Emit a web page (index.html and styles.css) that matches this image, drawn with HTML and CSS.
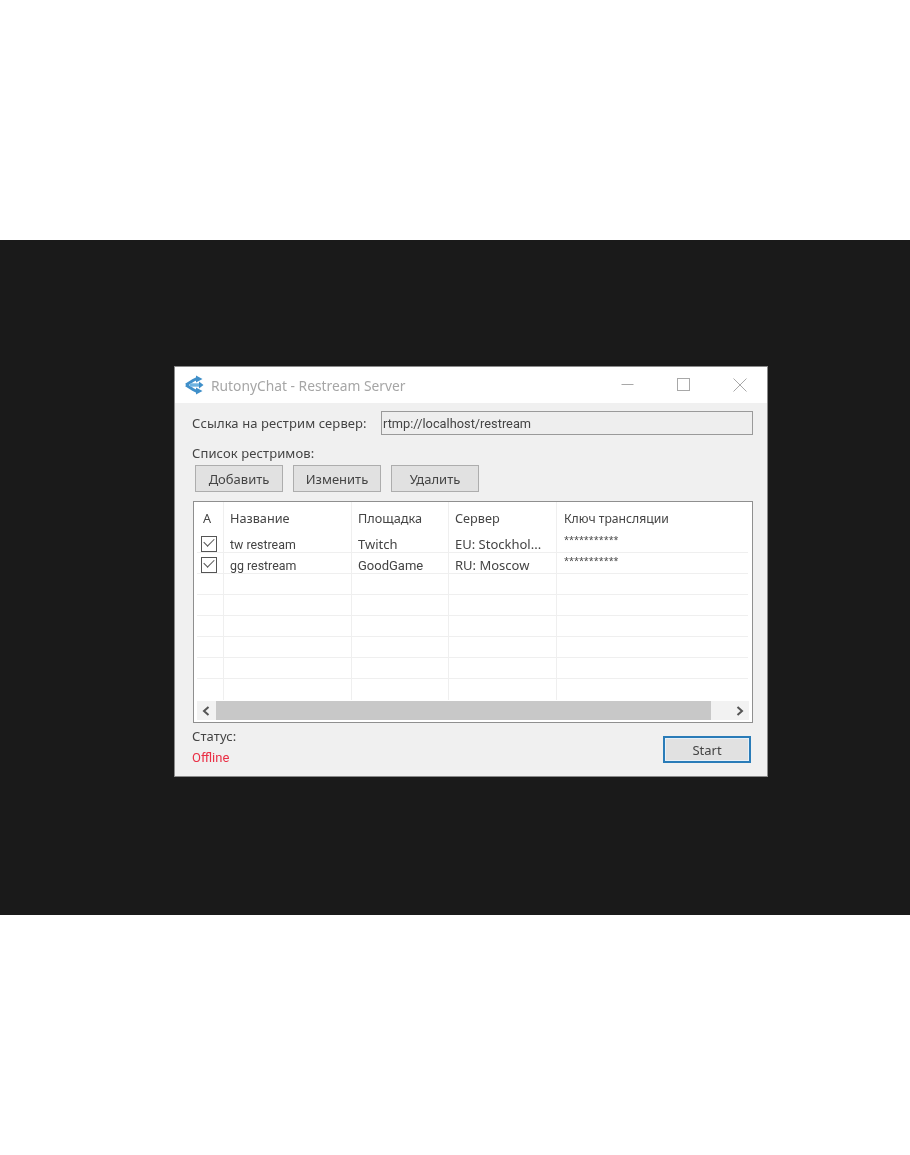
FILE: index.html
```html
<!DOCTYPE html>
<html lang="en">
<head>
    <meta charset="UTF-8">
    <title>RutonyChat - Restream Server</title>
    <link rel="stylesheet" href="styles.css">
</head>
<body>
    <main class="stage">
        <div class="window">
            <header class="titlebar">
                <svg class="app-icon" width="20" height="20" viewBox="0 0 20 20">
                    <path d="M2 10 L9 5.5 L13 3.5" fill="none" stroke="#3f8fc9" stroke-width="3"/>
                    <path d="M2 10 L9 14.5 L13 16.5" fill="none" stroke="#3f8fc9" stroke-width="3"/>
                    <path d="M6 10 H16" fill="none" stroke="#6db2e0" stroke-width="3.4"/>
                    <path d="M12 0.5 L18.5 4 L12 7.5 Z M12 12.5 L18.5 16 L12 19.5 Z M15 6.5 L19.5 10 L15 13.5 Z" fill="#3f8fc9"/>
                </svg>
                <span class="title">RutonyChat - Restream Server</span>
                <div class="win-controls">
                    <svg width="14" height="14" viewBox="0 0 14 14"><path d="M0.5 6.5 H12.5" stroke="#a8a8a8" fill="none"/></svg>
                    <svg width="14" height="14" viewBox="0 0 14 14"><rect x="0.5" y="0.5" width="12" height="12" stroke="#a8a8a8" fill="none"/></svg>
                    <svg width="14" height="14" viewBox="0 0 14 14"><path d="M0.5 0.5 L13.5 13.5 M13.5 0.5 L0.5 13.5" stroke="#a8a8a8" fill="none"/></svg>
                </div>
            </header>

            <div class="content">
                <div class="url-row">
                    <label class="label">Ссылка на рестрим сервер:</label>
                    <div class="url-box latin">rtmp://localhost/restream</div>
                </div>

                <div class="label list-label">Список рестримов:</div>
                <div class="toolbar">
                    <button class="btn">Добавить</button>
                    <button class="btn">Изменить</button>
                    <button class="btn">Удалить</button>
                </div>

                <div class="list">
                    <div class="list-head">
                        <div class="col col-a">A</div>
                        <div class="col col-name">Название</div>
                        <div class="col col-site">Площадка</div>
                        <div class="col col-server">Сервер</div>
                        <div class="col col-key">Ключ трансляции</div>
                    </div>
                    <div class="list-row">
                        <div class="col col-a"><span class="check"></span></div>
                        <div class="col col-name latin">tw restream</div>
                        <div class="col col-site">Twitch</div>
                        <div class="col col-server">EU: Stockhol...</div>
                        <div class="col col-key stars">***********</div>
                    </div>
                    <div class="list-row">
                        <div class="col col-a"><span class="check"></span></div>
                        <div class="col col-name latin">gg restream</div>
                        <div class="col col-site latin">GoodGame</div>
                        <div class="col col-server">RU: Moscow</div>
                        <div class="col col-key stars">***********</div>
                    </div>
                    <div class="list-row"><div class="col col-a"></div><div class="col col-name"></div><div class="col col-site"></div><div class="col col-server"></div><div class="col col-key"></div></div>
                    <div class="list-row"><div class="col col-a"></div><div class="col col-name"></div><div class="col col-site"></div><div class="col col-server"></div><div class="col col-key"></div></div>
                    <div class="list-row"><div class="col col-a"></div><div class="col col-name"></div><div class="col col-site"></div><div class="col col-server"></div><div class="col col-key"></div></div>
                    <div class="list-row"><div class="col col-a"></div><div class="col col-name"></div><div class="col col-site"></div><div class="col col-server"></div><div class="col col-key"></div></div>
                    <div class="list-row"><div class="col col-a"></div><div class="col col-name"></div><div class="col col-site"></div><div class="col col-server"></div><div class="col col-key"></div></div>
                    <div class="list-row last"><div class="col col-a"></div><div class="col col-name"></div><div class="col col-site"></div><div class="col col-server"></div><div class="col col-key"></div></div>

                    <div class="scrollbar">
                        <svg class="arrow" width="8" height="10" viewBox="0 0 8 10"><path d="M6.5 1 L2 5 L6.5 9" fill="none" stroke="#555" stroke-width="2"/></svg>
                        <div class="thumb"></div>
                        <svg class="arrow" width="8" height="10" viewBox="0 0 8 10"><path d="M1.5 1 L6 5 L1.5 9" fill="none" stroke="#555" stroke-width="2"/></svg>
                    </div>
                </div>

                <div class="bottom">
                    <div class="status">
                        <div class="label">Статус:</div>
                        <div class="offline latin">Offline</div>
                    </div>
                    <button class="btn btn-start latin">Start</button>
                </div>
            </div>
        </div>
    </main>
</body>
</html>
```

FILE: styles.css
```css
body {
    margin: 0;
    background: #fff;
    height: 1155px;
    overflow: hidden;
    font-family: "Noto Sans", "Liberation Sans", sans-serif;
    font-size: 13px;
    color: #444;
}

.latin {
    font-family: Roboto, "Noto Sans", sans-serif;
}

.stage {
    margin-top: 240px;
    height: 675px;
    background: #1a1a1a;
    padding: 126px 0 0 174px;
    box-sizing: border-box;
}

/* --- Window --- */
.window {
    width: 594px;
    height: 411px;
    background: #f0f0f0;
    border: 1px solid #8a8a8a;
    box-sizing: border-box;
    filter: blur(0.5px);
}

.titlebar {
    height: 36px;
    background: #fff;
    display: flex;
    align-items: center;
    padding-left: 9px;
}

.app-icon {
    margin-right: 7px;
}

.title {
    font-size: 13.8px;
    color: #a6a6a6;
}

.win-controls {
    margin-left: auto;
    display: flex;
    gap: 42px;
    padding-right: 20px;
}

.content {
    padding: 8px 14px 0 17px;
}

.label {
    line-height: 18px;
    letter-spacing: 0.1px;
}

.url-row {
    display: flex;
    align-items: center;
}

.url-row .label {
    width: 189px;
    flex-shrink: 0;
}

.url-box {
    width: 372px;
    height: 24px;
    line-height: 23px;
    font-size: 12.8px;
    padding-left: 1px;
    box-sizing: border-box;
    border: 1px solid #9a9a9a;
    background: #eeeeee;
}

.list-label {
    margin-top: 9px;
}

/* --- Buttons --- */
.toolbar {
    display: flex;
    gap: 10px;
    margin: 3px 0 0 3px;
}

.btn {
    width: 88px;
    height: 27px;
    padding: 0;
    font: inherit;
    color: inherit;
    background: #e1e1e1;
    border: 1px solid #adadad;
}

/* --- List --- */
.list {
    margin: 9px 0 0 1px;
    width: 560px;
    height: 222px;
    padding: 0 4px 0 3px;
    box-sizing: border-box;
    border: 1px solid #8f8f8f;
    background: #fff;
    position: relative;
}

.list-head {
    display: flex;
    height: 30px;
    align-items: stretch;
}

.list-row {
    display: flex;
    height: 21px;
    box-sizing: border-box;
    border-bottom: 1px solid #efefef;
}

.list-row.last {
    border-bottom: none;
}

.col {
    box-sizing: border-box;
    padding-left: 6px;
    line-height: 24px;
    white-space: nowrap;
    overflow: hidden;
    border-right: 1px solid #efefef;
}

.col.latin {
    line-height: 25px;
}

.col-name.latin {
    font-size: 12.4px;
}

.list-head .col {
    line-height: 33px;
    font-size: 12.7px;
}

.col-a { width: 27px; padding-left: 6px; }
.col-name { width: 128px; }
.col-site { width: 97px; }
.col-server { width: 108px; }
.col-key { width: 191px; border-right: none; padding-left: 7px; }

.list-head .col-key {
    font-size: 12.2px;
}

.stars {
    font-size: 9px;
    line-height: 16px;
}

.check {
    display: block;
    width: 16px;
    height: 16px;
    margin: 4px 0 0 -2px;
    box-sizing: border-box;
    border: 1px solid #555;
    position: relative;
    background: #fff;
}

.check::after {
    content: '';
    position: absolute;
    left: 2px;
    top: 1px;
    width: 9px;
    height: 5px;
    border-left: 1.5px solid #555;
    border-bottom: 1.5px solid #555;
    transform: rotate(-45deg);
}

.scrollbar {
    position: absolute;
    left: 3px;
    right: 3px;
    bottom: 2px;
    height: 19px;
    background: #f2f2f2;
    display: flex;
    align-items: center;
    padding: 0 5px;
    box-sizing: border-box;
}

.thumb {
    flex: 1;
    height: 19px;
    background: #c8c8c8;
    margin: 0 25px 0 6px;
}

/* --- Bottom --- */
.bottom {
    display: flex;
    justify-content: space-between;
    margin-top: 4px;
}

.offline {
    color: #ea2f45;
    line-height: 18px;
    margin-top: 4px;
}

.btn-start {
    width: 88px;
    height: 27px;
    margin: 9px 2px 0 0;
    border: 2px solid #2a7cb8;
    box-shadow: inset 0 0 0 1px #e6f0f8;
}
```
